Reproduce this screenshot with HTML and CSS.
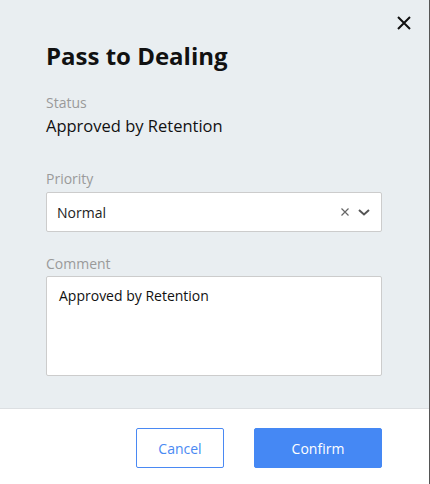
FILE: index.html
```html
<!DOCTYPE html>
<html>
<head>
<meta charset="utf-8">
<link rel="stylesheet" href="styles.css">
</head>
<body>
<div class="modal">
  <button class="close" aria-label="Close">
    <svg width="14" height="14" viewBox="0 0 14 14"><path d="M1 1L13 13M13 1L1 13" stroke="#111" stroke-width="2" fill="none"/></svg>
  </button>
  <div class="content">
    <h1 class="title">Pass to Dealing</h1>
    <div class="label">Status</div>
    <div class="value">Approved by Retention</div>
    <div class="field">
      <div class="label label-field">Priority</div>
      <div class="select">
        <span class="select-text">Normal</span>
        <span class="select-icons">
          <svg class="clear" width="8" height="8" viewBox="0 0 8 8"><path d="M0.5 0.5L7.5 7.5M7.5 0.5L0.5 7.5" stroke="#666" stroke-width="1.2" fill="none"/></svg>
          <svg class="chev" width="12" height="7" viewBox="0 0 12 7"><path d="M1 1L6 5.5L11 1" stroke="#555" stroke-width="2" fill="none"/></svg>
        </span>
      </div>
    </div>
    <div class="field field-comment">
      <div class="label label-comment">Comment</div>
      <div class="textarea">Approved by Retention</div>
    </div>
  </div>
  <div class="footer">
    <button class="btn btn-cancel">Cancel</button>
    <button class="btn btn-confirm">Confirm</button>
  </div>
</div>
</body>
</html>
```

FILE: styles.css
```css
* { box-sizing: border-box; }
html, body { margin: 0; padding: 0; }
body {
  font-family: "Open Sans", "Noto Sans", sans-serif;
  background: #fff;
  width: 430px;
  height: 484px;
  overflow: hidden;
}
.modal {
  position: relative;
  width: 430px;
  height: 484px;
  border-right: 1px solid #555;
  background: #fff;
  display: flex;
  flex-direction: column;
}
.close {
  position: absolute;
  top: 15px;
  right: 17px;
  width: 16px;
  height: 16px;
  padding: 0;
  border: 0;
  background: transparent;
  display: flex;
  align-items: center;
  justify-content: center;
}
.content {
  background: #e9eef1;
  padding: 41px 47px 32px 46px;
  border-bottom: 1px solid #dcdfe2;
}
.title {
  margin: 0 0 22px;
  font-size: 24px;
  line-height: 30px;
  font-weight: 700;
  color: #111;
}
.label {
  font-size: 14px;
  line-height: 20px;
  color: #9a9a9a;
}
.value {
  margin-top: 2px;
  font-size: 16.5px;
  line-height: 22px;
  color: #111;
}
.field { margin-top: 32px; }
.field-comment { margin-top: 22px; }
.label-field { margin-bottom: 3px; }
.label-comment { margin-bottom: 2px; }
.select {
  height: 40px;
  background: #fff;
  border: 1px solid #ccc;
  border-radius: 2px;
  display: flex;
  align-items: center;
  justify-content: space-between;
  padding: 0 11px 0 10px;
}
.select-text {
  font-size: 14px;
  color: #222;
}
.select-icons {
  display: flex;
  align-items: center;
  gap: 9px;
}
.textarea {
  height: 100px;
  background: #fff;
  border: 1px solid #ccc;
  border-radius: 2px;
  padding: 9px 12px;
  font-size: 14px;
  line-height: 20px;
  color: #111;
}
.footer {
  flex: 1;
  display: flex;
  justify-content: flex-end;
  align-items: flex-start;
  gap: 30px;
  padding: 19px 47px 0 0;
}
.btn {
  height: 40px;
  font-family: "Open Sans", "Noto Sans", sans-serif;
  font-size: 14px;
  border-radius: 2px;
  padding: 0;
}
.btn-cancel {
  width: 88px;
  background: #fff;
  border: 1px solid #4a89f3;
  color: #4a89f3;
}
.btn-confirm {
  width: 128px;
  background: #4588f4;
  border: 1px solid #4588f4;
  color: #fff;
}
```
